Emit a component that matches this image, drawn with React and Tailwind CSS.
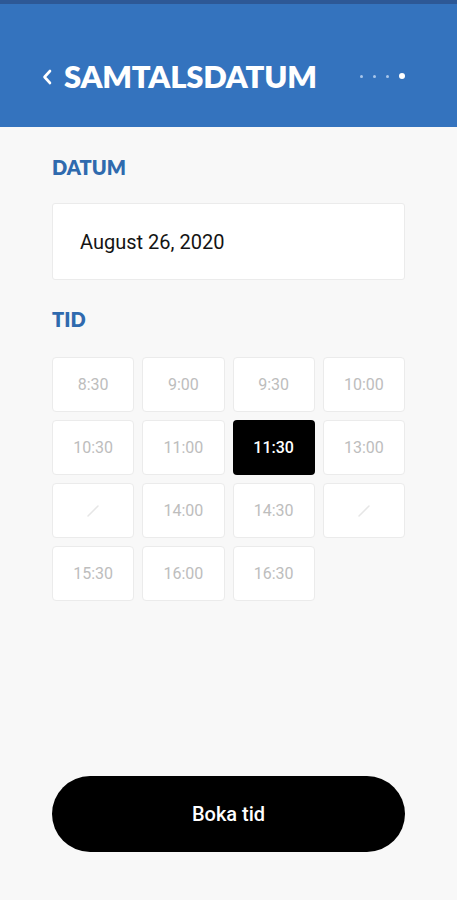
import React, { useState } from 'react';

const SLOTS = ['8:30', '9:00', '9:30', '10:00', '10:30', '11:00', '11:30', '13:00', null, '14:00', '14:30', null, '15:30', '16:00', '16:30'];

const Slash = () => (
  <svg width="16" height="16" viewBox="0 0 16 16" fill="none">
    <path d="M3 13 L13 3" stroke="#e6e6e6" strokeWidth="1.5" strokeLinecap="round" />
  </svg>
);

const App = () => {
  const [selected, setSelected] = useState('11:30');

  return (
    <div className="w-[457px] h-[900px] bg-[#f8f8f8] flex flex-col font-['Roboto',sans-serif]">
      <div className="h-[127px] bg-[#3473be] border-t-4 border-[#2d5896] flex items-center pt-[21px] pl-[42px] pr-[52px]">
        <svg width="10" height="16" viewBox="0 0 10 16" fill="none" className="mt-[2px]">
          <path d="M8 2 L2.5 8 L8 14" stroke="#fff" strokeWidth="2.6" strokeLinecap="round" strokeLinejoin="round" />
        </svg>
        <h1 className="ml-[12px] text-white font-['Lato',sans-serif] font-extrabold text-[31px] leading-none tracking-[-0.2px]">SAMTALSDATUM</h1>
        <div className="ml-auto flex items-center gap-[10px]">
          <span className="w-[3px] h-[3px] rounded-full bg-[#a9c6ea]" />
          <span className="w-[3px] h-[3px] rounded-full bg-[#a9c6ea]" />
          <span className="w-[3px] h-[3px] rounded-full bg-[#a9c6ea]" />
          <span className="w-[6px] h-[6px] rounded-full bg-white" />
        </div>
      </div>

      <div className="px-[52px] pt-[30px] flex flex-col flex-1">
        <h2 className="font-['Lato',sans-serif] font-extrabold text-[20px] leading-none text-[#2f6aae]">DATUM</h2>
        <div className="mt-[26px] h-[77px] bg-white border border-[#ebebeb] rounded-[3px] flex items-center pl-[27px] text-[20px] text-[#141414]">
          August 26, 2020
        </div>

        <h2 className="mt-[29px] font-['Lato',sans-serif] font-extrabold text-[20px] leading-none text-[#2f6aae]">TID</h2>
        <div className="mt-[28px] grid grid-cols-4 gap-x-[8px] gap-y-[8px]">
          {SLOTS.map((t, i) => (
            <button
              key={i}
              type="button"
              onClick={() => t && setSelected(t)}
              className={`h-[55px] rounded-[4px] flex items-center justify-center text-[16px] ${
                t === selected
                  ? 'bg-black text-white font-medium'
                  : 'bg-white border border-[#ebebeb] text-[#bdbdbd]'
              }`}
            >
              {t ?? <Slash />}
            </button>
          ))}
        </div>

        <button type="button" className="mt-auto mb-[48px] h-[76px] rounded-full bg-black text-white text-[20px] font-medium">
          Boka tid
        </button>
      </div>
    </div>
  );
};

export default App;
